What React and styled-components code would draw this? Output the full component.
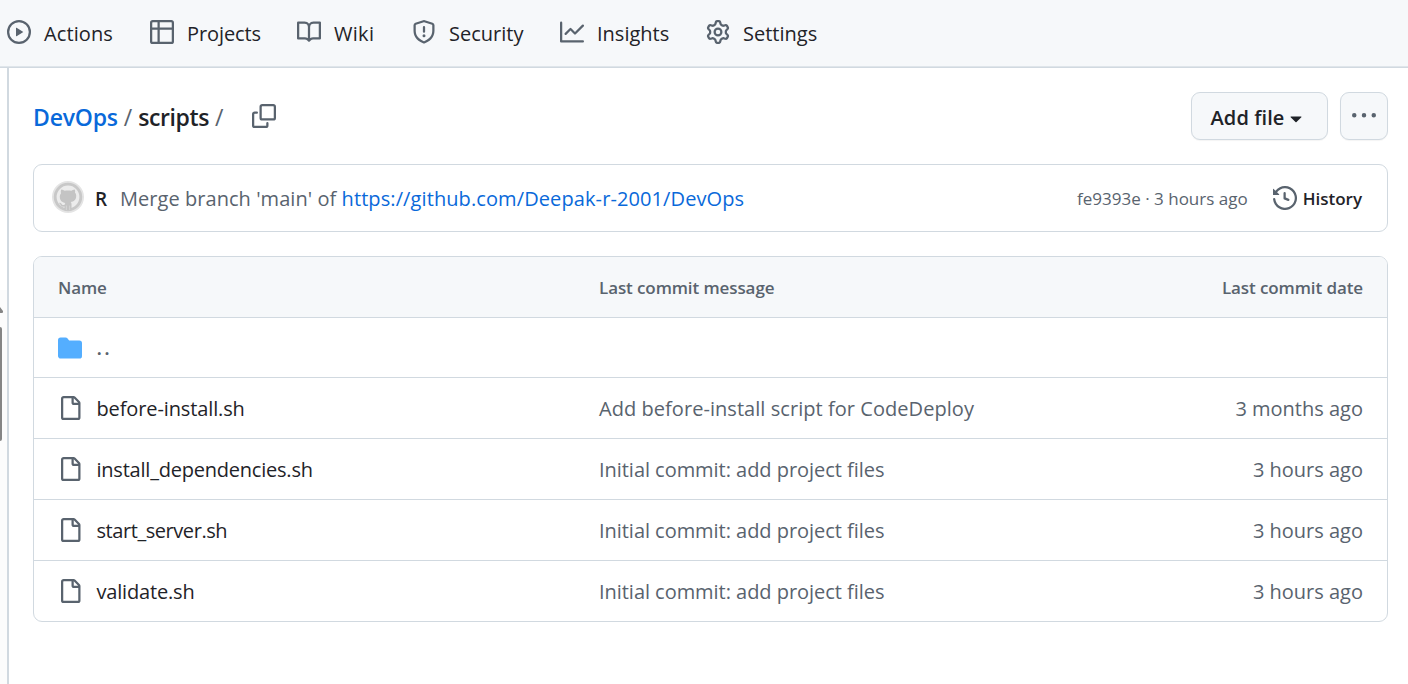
import React from "react";
import styled, { createGlobalStyle } from "styled-components";

const color = {
  border: "#d1d9e0",
  subtle: "#f6f8fa",
  text: "#1f2328",
  muted: "#59636e",
  link: "#0969da",
  folder: "#54aeff",
};

const GlobalStyle = createGlobalStyle`
  * { box-sizing: border-box; }
  body {
    margin: 0;
    background: #fff;
    color: ${color.text};
    font-family: "Open Sans", "Noto Sans", sans-serif;
    font-size: 20px;
    line-height: 30px;
  }
`;

/* ---------- icons (16 unit grid) ---------- */

const paths = {
  play: "M8 0a8 8 0 1 1 0 16A8 8 0 0 1 8 0ZM1.5 8a6.5 6.5 0 1 0 13 0 6.5 6.5 0 0 0-13 0Zm4.879-2.773 4.264 2.559a.25.25 0 0 1 0 .428l-4.264 2.559A.25.25 0 0 1 6 10.559V5.442a.25.25 0 0 1 .379-.215Z",
  table: "M0 1.75C0 .784.784 0 1.75 0h12.5C15.216 0 16 .784 16 1.75v12.5A1.75 1.75 0 0 1 14.25 16H1.75A1.75 1.75 0 0 1 0 14.25ZM6.5 6.5v8h7.75a.25.25 0 0 0 .25-.25V6.5Zm8-1.5V1.75a.25.25 0 0 0-.25-.25H6.5V5Zm-13 1.5v7.75c0 .138.112.25.25.25H5v-8ZM5 5V1.5H1.75a.25.25 0 0 0-.25.25V5Z",
  book: "M0 1.75A.75.75 0 0 1 .75 1h4.253c1.227 0 2.317.59 3 1.501A3.743 3.743 0 0 1 11.006 1h4.245a.75.75 0 0 1 .75.75v10.5a.75.75 0 0 1-.75.75h-4.507a2.25 2.25 0 0 0-1.591.659l-.622.621a.75.75 0 0 1-1.06 0l-.622-.621A2.25 2.25 0 0 0 5.258 13H.75a.75.75 0 0 1-.75-.75Zm7.251 10.324.004-5.073-.002-2.253A2.25 2.25 0 0 0 5.003 2.5H1.5v9h3.757a3.75 3.75 0 0 1 1.994.574ZM8.755 4.75l-.004 7.322a3.752 3.752 0 0 1 1.992-.572H14.5v-9h-3.495a2.25 2.25 0 0 0-2.25 2.25Z",
  shield: "M7.467.133a1.748 1.748 0 0 1 1.066 0l5.25 1.68A1.75 1.75 0 0 1 15 3.48V7c0 1.566-.32 3.182-1.303 4.682-.983 1.498-2.585 2.813-5.032 3.855a1.697 1.697 0 0 1-1.33 0c-2.447-1.042-4.049-2.357-5.032-3.855C1.32 10.182 1 8.566 1 7V3.48a1.75 1.75 0 0 1 1.217-1.667Zm.61 1.429a.25.25 0 0 0-.153 0l-5.25 1.68a.25.25 0 0 0-.174.238V7c0 1.358.275 2.666 1.057 3.86.784 1.194 2.121 2.34 4.366 3.297a.196.196 0 0 0 .154 0c2.245-.956 3.582-2.104 4.366-3.298C13.225 9.666 13.5 8.36 13.5 7V3.48a.251.251 0 0 0-.174-.237l-5.25-1.68ZM8.75 4.75v3a.75.75 0 0 1-1.5 0v-3a.75.75 0 0 1 1.5 0ZM9 10.5a1 1 0 1 1-2 0 1 1 0 0 1 2 0Z",
  graph: "M1.5 1.75V13.5h13.75a.75.75 0 0 1 0 1.5H.75a.75.75 0 0 1-.75-.75V1.75a.75.75 0 0 1 1.5 0Zm14.28 2.53-5.25 5.25a.75.75 0 0 1-1.06 0L7 7.06 4.28 9.78a.751.751 0 0 1-1.042-.018.751.751 0 0 1-.018-1.042l3.25-3.25a.75.75 0 0 1 1.06 0L10 7.94l4.72-4.72a.751.751 0 0 1 1.042.018.751.751 0 0 1 .018 1.042Z",
  gear: "M8 0a8.2 8.2 0 0 1 .701.031C9.444.095 9.99.645 10.16 1.29l.288 1.107c.018.066.079.158.212.224.231.114.454.243.668.386.123.082.233.09.299.071l1.103-.303c.644-.176 1.392.021 1.82.63.27.385.506.792.704 1.218.315.675.111 1.422-.364 1.891l-.814.806c-.049.048-.098.147-.088.294.016.257.016.515 0 .772-.01.147.038.246.088.294l.814.806c.475.469.679 1.216.364 1.891a7.977 7.977 0 0 1-.704 1.217c-.428.61-1.176.807-1.82.63l-1.102-.302c-.067-.019-.177-.011-.3.071a5.909 5.909 0 0 1-.668.386c-.133.066-.194.158-.211.224l-.29 1.106c-.168.646-.715 1.196-1.458 1.26a8.006 8.006 0 0 1-1.402 0c-.743-.064-1.289-.614-1.458-1.26l-.289-1.106c-.018-.066-.079-.158-.212-.224a5.738 5.738 0 0 1-.668-.386c-.123-.082-.233-.09-.299-.071l-1.103.303c-.644.176-1.392-.021-1.82-.63a8.12 8.12 0 0 1-.704-1.218c-.315-.675-.111-1.422.363-1.891l.815-.806c.05-.048.098-.147.088-.294a6.214 6.214 0 0 1 0-.772c.01-.147-.038-.246-.088-.294l-.815-.806C.635 6.045.431 5.298.746 4.623a7.92 7.92 0 0 1 .704-1.217c.428-.61 1.176-.807 1.82-.63l1.102.302c.067.019.177.011.3-.071.214-.143.437-.272.668-.386.133-.066.194-.158.211-.224l.29-1.106C6.009.645 6.556.095 7.299.03 7.53.01 7.764 0 8 0Zm-.571 1.525c-.036.003-.108.036-.137.146l-.289 1.105c-.147.561-.549.967-.998 1.189-.173.086-.34.183-.5.29-.417.278-.97.423-1.529.27l-1.103-.303c-.109-.03-.175.016-.195.045-.22.312-.412.644-.573.99-.014.031-.021.11.059.19l.815.806c.411.406.562.957.53 1.456a4.709 4.709 0 0 0 0 .582c.032.499-.119 1.05-.53 1.456l-.815.806c-.081.08-.073.159-.059.19.162.346.353.677.573.989.02.03.085.076.195.046l1.102-.303c.56-.153 1.113-.008 1.53.27.161.107.328.204.501.29.447.222.85.629.997 1.189l.289 1.105c.029.109.101.143.137.146a6.6 6.6 0 0 0 1.142 0c.036-.003.108-.036.137-.146l.289-1.105c.147-.561.549-.967.998-1.189.173-.086.34-.183.5-.29.417-.278.97-.423 1.529-.27l1.103.303c.109.029.175-.016.195-.045.22-.313.411-.644.573-.99.014-.031.021-.11-.059-.19l-.815-.806c-.411-.406-.562-.957-.53-1.456a4.709 4.709 0 0 0 0-.582c-.032-.499.119-1.05.53-1.456l.815-.806c.081-.08.073-.159.059-.19a6.464 6.464 0 0 0-.573-.989c-.02-.03-.085-.076-.195-.046l-1.102.303c-.56.153-1.113.008-1.53-.27a4.44 4.44 0 0 0-.501-.29c-.447-.222-.85-.629-.997-1.189l-.289-1.105c-.029-.11-.101-.143-.137-.146a6.6 6.6 0 0 0-1.142 0ZM11 8a3 3 0 1 1-6 0 3 3 0 0 1 6 0ZM9.5 8a1.5 1.5 0 1 0-3.001.001A1.5 1.5 0 0 0 9.5 8Z",
  copy: "M0 6.75C0 5.784.784 5 1.75 5h1.5a.75.75 0 0 1 0 1.5h-1.5a.25.25 0 0 0-.25.25v7.5c0 .138.112.25.25.25h7.5a.25.25 0 0 0 .25-.25v-1.5a.75.75 0 0 1 1.5 0v1.5A1.75 1.75 0 0 1 9.25 16h-7.5A1.75 1.75 0 0 1 0 14.25ZM5 1.75C5 .784 5.784 0 6.75 0h7.5C15.216 0 16 .784 16 1.75v7.5A1.75 1.75 0 0 1 14.25 11h-7.5A1.75 1.75 0 0 1 5 9.25Zm1.75-.25a.25.25 0 0 0-.25.25v7.5c0 .138.112.25.25.25h7.5a.25.25 0 0 0 .25-.25v-7.5a.25.25 0 0 0-.25-.25Z",
  caret: "m4.427 7.427 3.396 3.396a.25.25 0 0 0 .354 0l3.396-3.396A.25.25 0 0 0 11.396 7H4.604a.25.25 0 0 0-.177.427Z",
  kebab: "M8 9a1.5 1.5 0 1 0 0-3 1.5 1.5 0 0 0 0 3ZM1.5 9a1.5 1.5 0 1 0 0-3 1.5 1.5 0 0 0 0 3Zm13 0a1.5 1.5 0 1 0 0-3 1.5 1.5 0 0 0 0 3Z",
  history: "m.427 1.927 1.215 1.215a8.002 8.002 0 1 1-1.6 5.685.75.75 0 1 1 1.493-.154 6.5 6.5 0 1 0 1.18-4.458l1.358 1.358A.25.25 0 0 1 3.896 6H.25A.25.25 0 0 1 0 5.75V2.104a.25.25 0 0 1 .427-.177ZM7.75 4a.75.75 0 0 1 .75.75v2.992l2.028.812a.75.75 0 0 1-.557 1.392l-2.5-1A.751.751 0 0 1 7 8.25v-3.5A.75.75 0 0 1 7.75 4Z",
  file: "M2 1.75C2 .784 2.784 0 3.75 0h6.586c.464 0 .909.184 1.237.513l2.914 2.914c.329.328.513.773.513 1.237v9.586A1.75 1.75 0 0 1 13.25 16h-9.5A1.75 1.75 0 0 1 2 14.25Zm1.75-.25a.25.25 0 0 0-.25.25v12.5c0 .138.112.25.25.25h9.5a.25.25 0 0 0 .25-.25V6h-2.75A1.75 1.75 0 0 1 9 4.25V1.5Zm6.75.062V4.25c0 .138.112.25.25.25h2.688l-.011-.013-2.914-2.914-.013-.011Z",
  folder: "M1.75 1A1.75 1.75 0 0 0 0 2.75v10.5C0 14.216.784 15 1.75 15h12.5A1.75 1.75 0 0 0 16 13.25v-8.5A1.75 1.75 0 0 0 14.25 3H7.5a.25.25 0 0 1-.2-.1l-.9-1.2C6.07 1.26 5.55 1 5 1H1.75Z",
};

const Svg = styled.svg`
  display: block;
  flex: none;
  width: 24px;
  height: 24px;
  fill: ${(p) => p.$color || color.muted};
`;

const Icon = ({ name, tint }) => (
  <Svg viewBox="0 0 16 16" $color={tint} aria-hidden="true">
    <path d={paths[name]} />
  </Svg>
);

/* ---------- page ---------- */

const Page = styled.div`
  display: flex;
  flex-direction: column;
  height: 684px;
  overflow: hidden;
`;

const Nav = styled.nav`
  display: flex;
  height: 68px;
  padding: 0 0 2px 7px;
  background: ${color.subtle};
  border-bottom: 1px solid ${color.border};
  box-shadow: inset 0 -1px 0 #dfe5ea;
`;

const NavItem = styled.a`
  display: flex;
  align-items: center;
  gap: 13px;
  flex: none;
  width: ${(p) => p.$width}px;
  padding-bottom: 1px;
  letter-spacing: ${(p) => p.$track || 0}px;
`;

const NavLabel = styled.span`
  padding-top: 4px;
`;

const Body = styled.div`
  display: flex;
  flex: 1;
  min-height: 0;
`;

const Gutter = styled.div`
  display: flex;
  flex-direction: column;
  flex: none;
  width: 9px;
  padding-top: 222px;
  border-right: 2px solid ${color.border};
`;

const ScrollTrack = styled.div`
  flex: 1;
  padding-top: 17px;
  background: #fcfcfc;
`;

const ScrollArrow = styled.svg`
  display: block;
  width: 3px;
  height: 7px;
  margin-bottom: 13px;
  fill: #858585;
`;

const ScrollThumb = styled.div`
  width: 2px;
  height: 114px;
  background: #858585;
  border-radius: 0 2px 2px 0;
`;

const Content = styled.main`
  flex: 1;
  min-width: 0;
  padding: 24px 20px 0 24px;
`;

const TitleRow = styled.header`
  display: flex;
  align-items: center;
  height: 48px;
  margin-bottom: 24px;
`;

const Crumbs = styled.h1`
  display: flex;
  align-items: center;
  width: 219px;
  margin: 0;
  padding-top: 1px;
  font-size: 23px;
  font-weight: 400;
  white-space: pre;
`;

const Crumb = styled.span`
  color: ${(p) => (p.$link ? color.link : color.text)};
  font-weight: 600;
  letter-spacing: ${(p) => p.$track}px;
`;

const Slash = styled.span`
  padding: 0 6px;
  color: ${color.muted};
`;

const Actions = styled.div`
  display: flex;
  gap: 12px;
  margin-left: auto;
`;

const Button = styled.button`
  display: flex;
  align-items: center;
  justify-content: center;
  width: ${(p) => p.$width}px;
  height: 48px;
  padding: ${(p) => p.$pad || 0};
  color: ${color.text};
  background: ${color.subtle};
  border: 1px solid ${color.border};
  border-radius: 9px;
  box-shadow: 0 1px 1px rgba(31, 35, 40, 0.05);
  font: 600 20px/30px "Open Sans", "Noto Sans", sans-serif;
  letter-spacing: 0.08px;
`;

const CommitBar = styled.section`
  display: flex;
  align-items: center;
  height: 68px;
  margin-bottom: 24px;
  padding: 0 25px 0 18px;
  border: 1px solid ${color.border};
  border-radius: 9px;
`;

const AvatarSvg = styled.svg`
  display: block;
  flex: none;
  width: 32px;
  height: 32px;
  margin: 0 11px 2px 0;
`;

const Author = styled.b`
  width: 25px;
  padding-top: 2px;
  font-size: 19px;
  font-weight: 600;
`;

const Message = styled.span`
  padding-top: 2px;
  color: ${color.muted};
  letter-spacing: 0.05px;
  white-space: pre;
`;

const Link = styled.a`
  color: ${color.link};
  letter-spacing: 0.1px;
`;

const CommitMeta = styled.span`
  margin: 0 25px 0 auto;
  padding-top: 2px;
  color: ${color.muted};
  font-size: 17px;
`;

const History = styled.a`
  display: flex;
  align-items: center;
  gap: 6px;
  font-size: 17px;
  font-weight: 600;
`;

const HistoryLabel = styled.span`
  padding-top: 2px;
`;

const Table = styled.section`
  border: 1px solid ${color.border};
  border-radius: 9px;
  overflow: hidden;
`;

const Row = styled.div`
  display: grid;
  grid-template-columns: 541px 1fr auto;
  align-items: center;
  height: ${(p) => p.$height || 61}px;
  padding: 0 24px;
  color: ${color.muted};
  border-top: 1px solid ${color.border};
`;

const HeadRow = styled(Row)`
  background: ${color.subtle};
  border-top: 0;
  font-size: 17px;
  font-weight: 600;
`;

const NameCell = styled.div`
  display: flex;
  align-items: center;
  gap: 14.5px;
`;

const FileName = styled.span`
  padding-top: 2px;
  color: ${color.text};
  letter-spacing: ${(p) => p.$track || 0}px;
`;

const ParentLink = styled.span`
  color: ${color.muted};
  font-weight: 600;
  letter-spacing: 2.2px;
`;

const Cell = styled.span`
  padding-top: 2px;
  letter-spacing: ${(p) => p.$track || 0}px;
`;

const tabs = [
  { icon: "play", label: "Actions", width: 143, track: 0.1 },
  { icon: "table", label: "Projects", width: 147, track: -0.1 },
  { icon: "book", label: "Wiki", width: 115, track: 0.3 },
  { icon: "shield", label: "Security", width: 148 },
  { icon: "graph", label: "Insights", width: 146 },
  { icon: "gear", label: "Settings", width: 130 },
];

const files = [
  { name: "before-install.sh", track: -0.12, message: "Add before-install script for CodeDeploy", messageTrack: 0.05, date: "3 months ago" },
  { name: "install_dependencies.sh", track: -0.22, message: "Initial commit: add project files", messageTrack: -0.04, date: "3 hours ago" },
  { name: "start_server.sh", track: -0.44, message: "Initial commit: add project files", messageTrack: -0.04, date: "3 hours ago" },
  { name: "validate.sh", track: -0.18, message: "Initial commit: add project files", messageTrack: -0.04, date: "3 hours ago" },
];

const Avatar = () => (
  <AvatarSvg viewBox="0 0 32 32" aria-hidden="true">
    <circle cx="16" cy="16" r="16" fill="#e4e4e4" />
    <circle cx="16" cy="16" r="12.8" fill="#ececec" stroke="#c8c8c8" strokeWidth="2.8" />
    <path
      fill="#c4c4c4"
      d="M9.3 8.4c1.4.1 2.6.8 3.5 1.4 2.1-.5 4.3-.5 6.4 0 .9-.6 2.1-1.3 3.5-1.4.6 1.4.5 2.5.2 3.2 1 1.1 1.3 2.3 1.3 3.5 0 4-2.4 5.6-5.5 6 .7.7.8 1.6.8 2.6v4.6c-2.2.8-4.8.8-7 0v-2.7c-3.4.6-3.6-1.6-4.6-2.7-.4-.4-.8-.6-.8-.9.9-.5 2 .2 2.7 1.2.7 1 1.6 1 2.7.7.1-.8.3-1.5.8-2-3.1-.4-5.5-2.1-5.5-6.1 0-1.3.4-2.5 1.3-3.5-.4-1-.4-2.4.2-3.9Z"
    />
    <path d="M14.3 24.5v4.5M17.7 24.5v4.5" stroke="#dedede" strokeWidth=".7" />
  </AvatarSvg>
);

export default function App() {
  return (
    <Page>
      <GlobalStyle />
      <Nav>
        {tabs.map((tab) => (
          <NavItem key={tab.label} $width={tab.width} $track={tab.track}>
            <Icon name={tab.icon} />
            <NavLabel>{tab.label}</NavLabel>
          </NavItem>
        ))}
      </Nav>
      <Body>
        <Gutter>
          <ScrollTrack>
            <ScrollArrow viewBox="0 0 3 7">
              <path d="M0 0 2.6 3.6a1.4 1.4 0 0 1-1 2.4H0Z" />
            </ScrollArrow>
            <ScrollThumb />
          </ScrollTrack>
        </Gutter>
        <Content>
          <TitleRow>
            <Crumbs>
              <Crumb $link $track={-0.2}>DevOps</Crumb>
              <Slash>/</Slash>
              <Crumb $track={-0.4}>scripts</Crumb>
              <Slash>/</Slash>
            </Crumbs>
            <Icon name="copy" />
            <Actions>
              <Button $width={137} $pad="3px 0 0">
                Add file
                <Icon name="caret" tint={color.text} />
              </Button>
              <Button $width={48}>
                <Icon name="kebab" />
              </Button>
            </Actions>
          </TitleRow>
          <CommitBar>
            <Avatar />
            <Author>R</Author>
            <Message>
              Merge branch 'main' of <Link>https://github.com/Deepak-r-2001/DevOps</Link>
            </Message>
            <CommitMeta>fe9393e · 3 hours ago</CommitMeta>
            <History>
              <Icon name="history" />
              <HistoryLabel>History</HistoryLabel>
            </History>
          </CommitBar>
          <Table>
            <HeadRow $height={60}>
              <Cell $track={-0.1}>Name</Cell>
              <Cell $track={-0.1}>Last commit message</Cell>
              <Cell $track={-0.1}>Last commit date</Cell>
            </HeadRow>
            <Row $height={60}>
              <NameCell>
                <Icon name="folder" tint={color.folder} />
                <ParentLink>..</ParentLink>
              </NameCell>
            </Row>
            {files.map((file) => (
              <Row key={file.name}>
                <NameCell>
                  <Icon name="file" />
                  <FileName $track={file.track}>{file.name}</FileName>
                </NameCell>
                <Cell $track={file.messageTrack}>{file.message}</Cell>
                <Cell>{file.date}</Cell>
              </Row>
            ))}
          </Table>
        </Content>
      </Body>
    </Page>
  );
}
